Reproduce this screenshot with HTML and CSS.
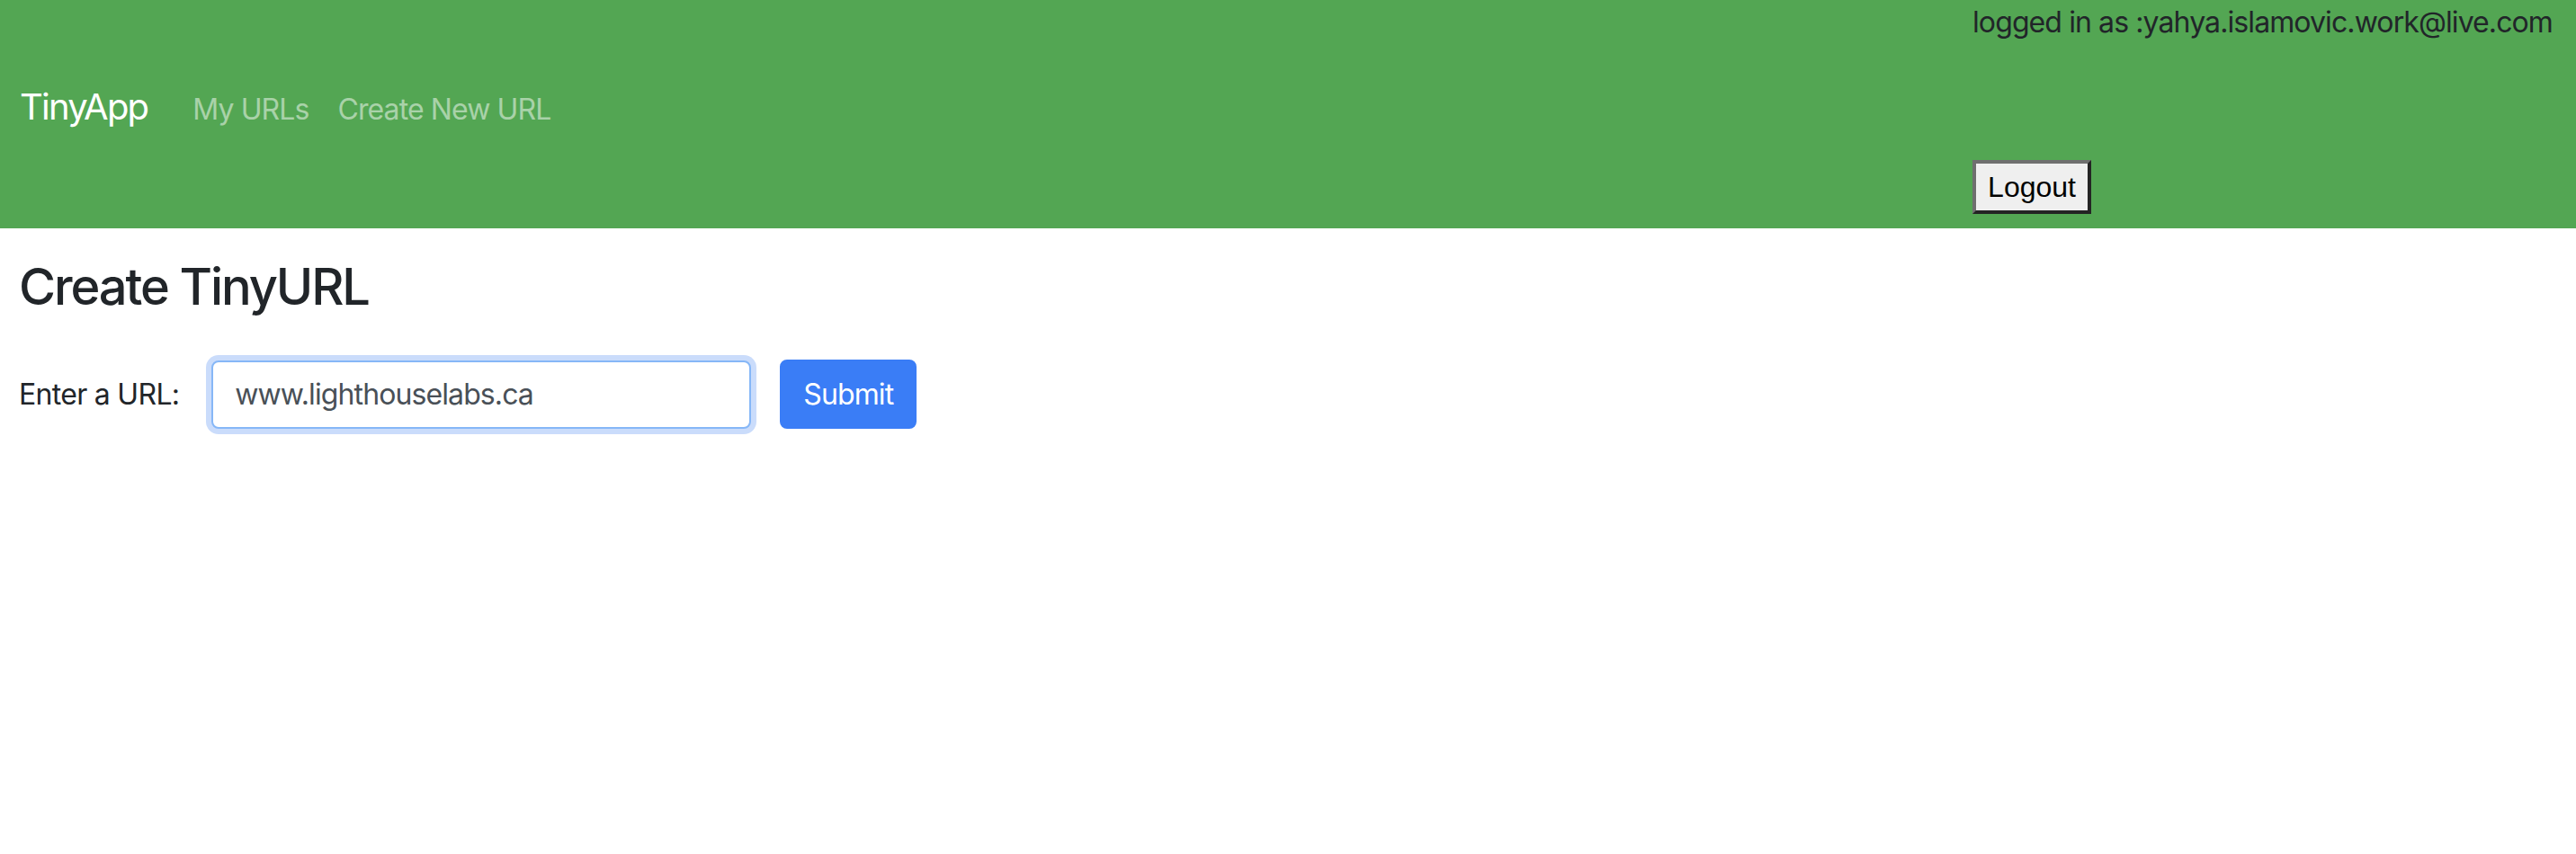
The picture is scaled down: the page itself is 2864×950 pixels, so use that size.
FILE: index.html
```html
<!DOCTYPE html>
<html lang="en">
<head>
<meta charset="utf-8">
<title>TinyApp</title>
<link rel="stylesheet" href="styles.css">
</head>
<body>
<nav class="navbar">
  <div class="nav-left">
    <a class="brand" href="#">TinyApp</a>
    <a class="nav-link" href="#">My URLs</a>
    <a class="nav-link" href="#">Create New URL</a>
  </div>
  <div class="nav-right">
    <p class="user">logged in as :yahya.islamovic.work@live.com</p>
    <form class="logout-form">
      <button type="button" class="logout">Logout</button>
    </form>
  </div>
</nav>
<main class="main">
  <h1 class="title">Create TinyURL</h1>
  <form class="url-form">
    <label class="url-label" for="longURL">Enter a URL:</label>
    <input id="longURL" class="url-input" type="text" value="www.lighthouselabs.ca">
    <button type="button" class="submit">Submit</button>
  </form>
</main>
</body>
</html>
```
FILE: styles.css
```css
* { box-sizing: border-box; }
html, body { margin: 0; padding: 0; background: #ffffff; }
body {
  font-family: Inter, "Noto Sans", sans-serif;
  color: #212529;
  font-size: 32px;
  line-height: 1.5;
  letter-spacing: -0.9px;
}
.navbar {
  display: flex;
  align-items: center;
  background: #53a653;
  padding: 0 26px 16px 22px;
}
.nav-left {
  display: flex;
  align-items: baseline;
}
.brand {
  font-size: 40px;
  line-height: 60px;
  letter-spacing: -1.8px;
  color: #ffffff;
  text-decoration: none;
  margin-right: 34px;
}
.nav-link {
  font-size: 32px;
  line-height: 48px;
  color: rgba(255, 255, 255, 0.5);
  text-decoration: none;
  padding: 0 16px;
}
.nav-right {
  margin-left: auto;
  display: flex;
  flex-direction: column;
  align-items: flex-start;
}
.user {
  margin: 0;
  padding-top: 1px;
  line-height: 48px;
  height: 48px;
  color: #212529;
  white-space: nowrap;
}
.logout-form { margin: 130px 0 0 0; }
.logout {
  height: 60px;
  width: 132px;
  padding: 0;
  font-family: "Liberation Sans", Arial, sans-serif;
  font-size: 32px;
  line-height: 48px;
  letter-spacing: 0;
  color: #000000;
  background: #efefef;
  border-width: 4px;
  border-style: solid;
  border-color: #6f6f6f #242424 #242424 #6f6f6f;
  border-radius: 0;
}
.main {
  padding: 32px 21px;
}
.title {
  margin: 0 0 47px 0;
  font-size: 56px;
  font-weight: 500;
  line-height: 1.2;
  letter-spacing: -2.1px;
  color: #212529;
}
.url-form {
  display: flex;
  align-items: center;
}
.url-label {
  font-size: 32px;
  line-height: 48px;
  letter-spacing: -0.7px;
  margin-right: 36px;
}
.url-input {
  width: 600px;
  height: 76px;
  padding: 0 24px;
  font-family: Inter, "Noto Sans", sans-serif;
  font-size: 32px;
  letter-spacing: -0.9px;
  color: #495057;
  background: #ffffff;
  border: 2px solid #86b7f7;
  border-radius: 8px;
  box-shadow: 0 0 0 6px #cadcfb;
  outline: none;
  margin-right: 32px;
}
.submit {
  height: 77px;
  padding: 0 24px;
  font-family: Inter, "Noto Sans", sans-serif;
  font-size: 32px;
  letter-spacing: -0.9px;
  color: #ffffff;
  background: #3a7df6;
  border: 2px solid #3a7df6;
  border-radius: 8px;
}
```
